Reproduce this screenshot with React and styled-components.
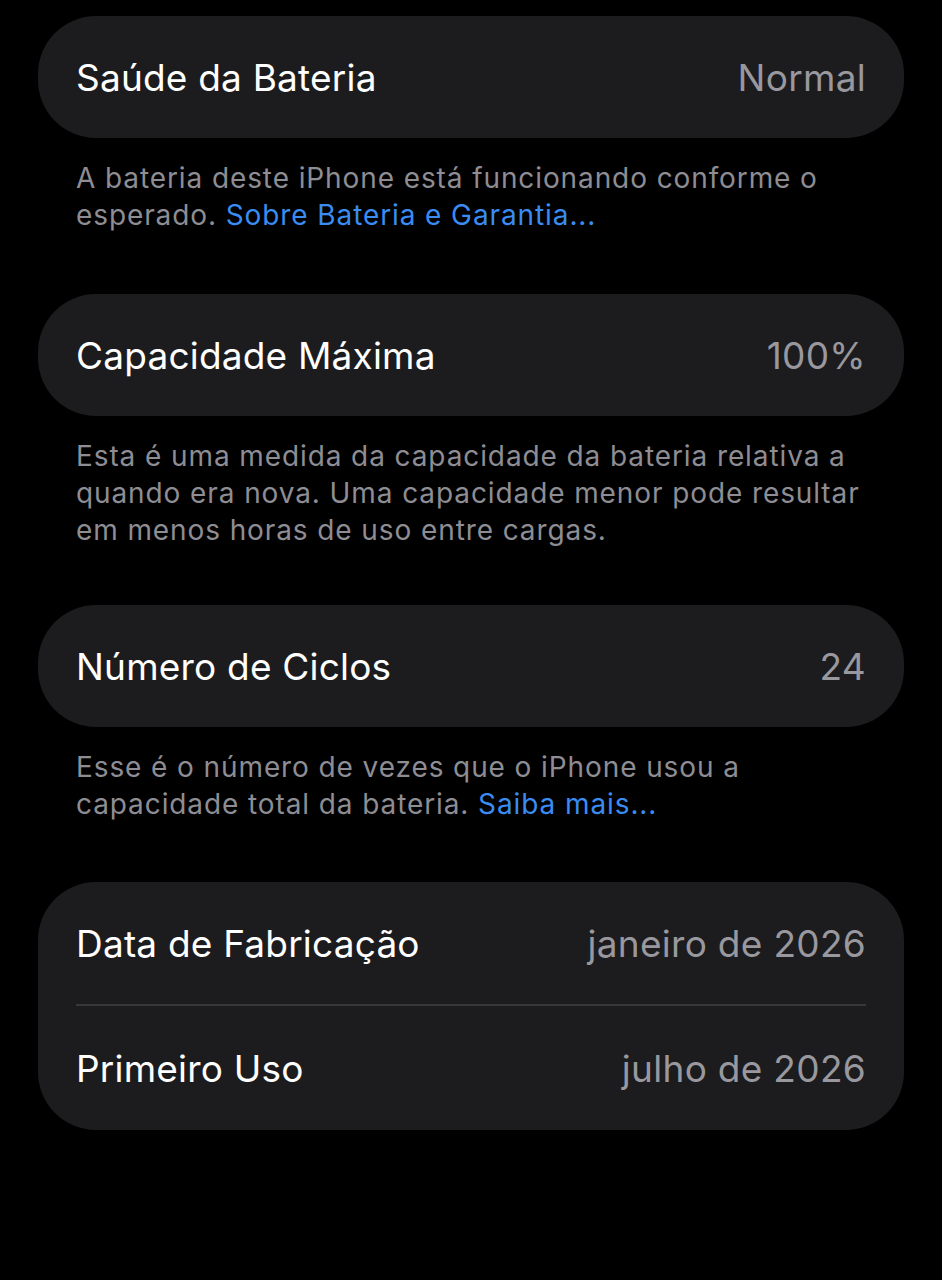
import React from "react";
import styled, { createGlobalStyle } from "styled-components";

const GlobalStyle = createGlobalStyle`
  html, body {
    margin: 0;
    padding: 0;
    background: #000;
  }
  body {
    font-family: Inter, "Noto Sans", "Liberation Sans", sans-serif;
    -webkit-font-smoothing: antialiased;
  }
`;

const Page = styled.div`
  min-height: 1280px;
  background: #000;
  padding: 16px 38px 0 38px;
  box-sizing: border-box;
`;

const Section = styled.section`
  margin-bottom: ${(p) => p.$gap || 60}px;
`;

const Card = styled.div`
  background: #1c1c1e;
  border-radius: 58px;
  overflow: hidden;
`;

const Row = styled.div`
  height: ${(p) => p.$h || 122}px;
  display: flex;
  align-items: center;
  justify-content: space-between;
  padding: 0 38px;
  box-sizing: border-box;
`;

const Label = styled.span`
  color: #ffffff;
  font-size: 37px;
  letter-spacing: 0.2px;
`;

const Value = styled.span`
  color: #98989e;
  font-size: 37px;
  letter-spacing: 0.3px;
`;

const Divider = styled.div`
  height: 2px;
  background: #38383a;
  margin: 0 38px;
`;

const Footer = styled.p`
  margin: 0;
  padding: 22px 38px 0 38px;
  color: #8d8d93;
  font-size: 28px;
  line-height: 37px;
  letter-spacing: 0.9px;
`;

const Link = styled.a`
  color: #3a8cf2;
  text-decoration: none;
`;

export default function App() {
  return (
    <>
      <GlobalStyle />
      <Page>
        <Section $gap={60}>
          <Card>
            <Row>
              <Label>Saúde da Bateria</Label>
              <Value>Normal</Value>
            </Row>
          </Card>
          <Footer>
            A bateria deste iPhone está funcionando conforme o esperado.{" "}
            <Link>Sobre Bateria e Garantia...</Link>
          </Footer>
        </Section>

        <Section $gap={56}>
          <Card>
            <Row>
              <Label>Capacidade Máxima</Label>
              <Value>100%</Value>
            </Row>
          </Card>
          <Footer>
            Esta é uma medida da capacidade da bateria relativa a quando era
            nova. Uma capacidade menor pode resultar em menos horas de uso entre
            cargas.
          </Footer>
        </Section>

        <Section $gap={59}>
          <Card>
            <Row>
              <Label>Número de Ciclos</Label>
              <Value>24</Value>
            </Row>
          </Card>
          <Footer>
            Esse é o número de vezes que o iPhone usou a capacidade total da
            bateria. <Link>Saiba mais...</Link>
          </Footer>
        </Section>

        <Section>
          <Card>
            <Row $h={122}>
              <Label>Data de Fabricação</Label>
              <Value>janeiro de 2026</Value>
            </Row>
            <Divider />
            <Row $h={124}>
              <Label>Primeiro Uso</Label>
              <Value>julho de 2026</Value>
            </Row>
          </Card>
        </Section>
      </Page>
    </>
  );
}
